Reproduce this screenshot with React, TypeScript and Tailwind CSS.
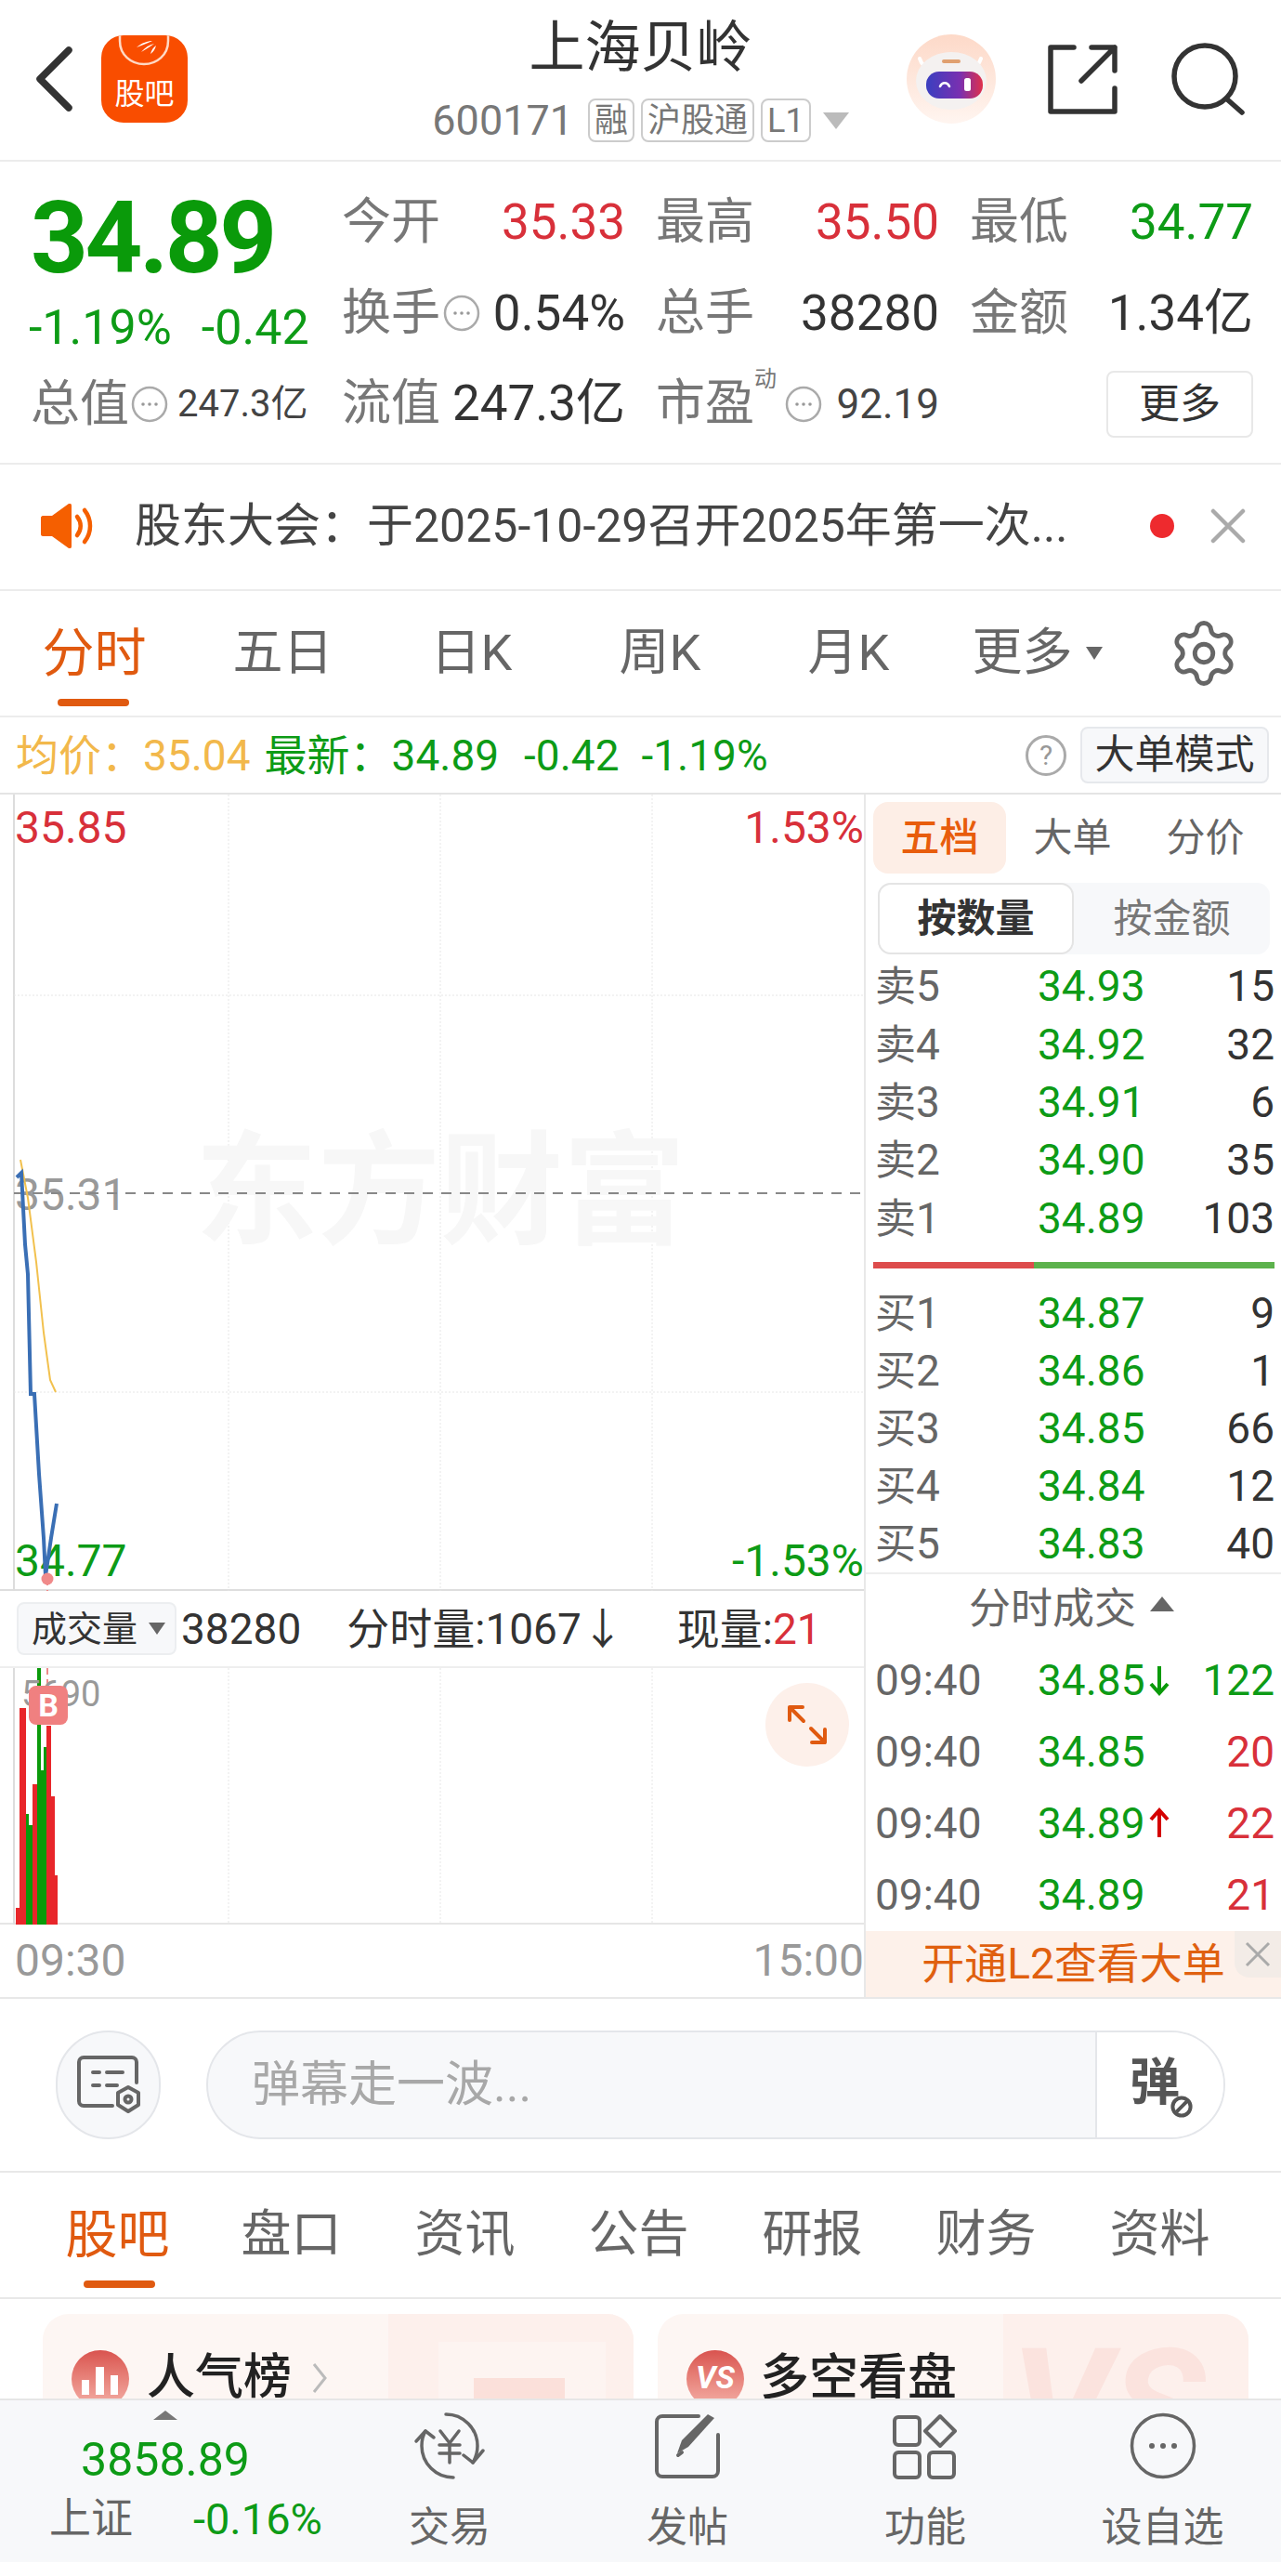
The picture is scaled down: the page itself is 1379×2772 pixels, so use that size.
import { Settings } from "lucide-react";

const askRows = [
  ["卖5", "34.93", "15"],
  ["卖4", "34.92", "32"],
  ["卖3", "34.91", "6"],
  ["卖2", "34.90", "35"],
  ["卖1", "34.89", "103"],
];

const bidRows = [
  ["买1", "34.87", "9"],
  ["买2", "34.86", "1"],
  ["买3", "34.85", "66"],
  ["买4", "34.84", "12"],
  ["买5", "34.83", "40"],
];

const trades = [
  { price: "34.85", arrow: "down", vol: "122", up: false },
  { price: "34.85", arrow: "", vol: "20", up: true },
  { price: "34.89", arrow: "up", vol: "22", up: true },
  { price: "34.89", arrow: "", vol: "21", up: true },
];

const volumeBars = [
  { x: 17, w: 4, y: 2053, up: true },
  { x: 21, w: 7, y: 1838, up: true },
  { x: 28, w: 3, y: 1952, up: false },
  { x: 31, w: 4, y: 1964, up: false },
  { x: 35, w: 5, y: 1920, up: true },
  { x: 40, w: 4, y: 1795, up: false },
  { x: 44, w: 3, y: 1905, up: false },
  { x: 47, w: 3, y: 1880, up: false },
  { x: 50, w: 5, y: 1857, up: true },
  { x: 55, w: 4, y: 1933, up: true },
  { x: 59, w: 3, y: 2018, up: true },
];

function MoreDots() {
  return (
    <svg width="40" height="40" viewBox="0 0 40 40" className="shrink-0" fill="none">
      <circle cx="20" cy="20" r="18" stroke="#aaa" strokeWidth="2.5" />
      <circle cx="13" cy="20" r="1.8" fill="#999" />
      <circle cx="20" cy="20" r="1.8" fill="#999" />
      <circle cx="27" cy="20" r="1.8" fill="#999" />
    </svg>
  );
}

function Chip({ children }: { children: React.ReactNode }) {
  return (
    <span className="h-[47px] px-[5px] flex items-center justify-center border-2 border-[#ccc] rounded-[8px] text-[36px] leading-none text-[#777]">
      {children}
    </span>
  );
}

function Cell({ label, value, tone }: { label: string; value: string; tone: string }) {
  return (
    <div className="flex items-center justify-between">
      <span className="text-[#777] leading-none">{label}</span>
      <span className={`leading-none ${tone}`}>{value}</span>
    </div>
  );
}

function Robot() {
  return (
    <svg width="96" height="96" viewBox="0 0 96 96">
      <defs>
        <linearGradient id="halo" x1="0" y1="0" x2="0" y2="1">
          <stop offset="0" stopColor="#fdd9c8" />
          <stop offset="1" stopColor="#fff5f0" />
        </linearGradient>
        <linearGradient id="visor" x1="0" y1="0" x2="1" y2="0">
          <stop offset="0" stopColor="#3a3fc0" />
          <stop offset="0.6" stopColor="#7a30b0" />
          <stop offset="1" stopColor="#e0304a" />
        </linearGradient>
      </defs>
      <circle cx="48" cy="48" r="48" fill="url(#halo)" />
      <path d="M14 26c2 6 5 9 10 11M80 26c-2 6-5 9-10 11" stroke="#fff" strokeWidth="4" fill="none" strokeLinecap="round" />
      <ellipse cx="48" cy="50" rx="38" ry="31" fill="#f4f1f0" />
      <rect x="38" y="27" width="20" height="4" rx="2" fill="#e0a070" />
      <rect x="21" y="40" width="61" height="29" rx="14" fill="url(#visor)" />
      <path d="M36 56c2-5 8-5 10 0" stroke="#fff" strokeWidth="2.5" fill="none" strokeLinecap="round" />
      <rect x="62" y="47" width="7" height="14" rx="2.5" fill="#fff" />
    </svg>
  );
}

export default function App() {
  return (
    <div className="w-[1379px] h-[2772px] overflow-hidden bg-white flex flex-col font-[Roboto,'Noto_Sans_CJK_SC',sans-serif]">
      {/* Header */}
      <header className="h-[174px] shrink-0 border-b-2 border-[#ececec] grid grid-cols-[1fr_auto_1fr]">
        <div className="h-[170px] flex items-center pl-[39px]">
          <svg width="39" height="70" viewBox="0 0 39 70" fill="none">
            <path d="M35 4 4 35l31 31" stroke="#333" strokeWidth="7.5" strokeLinecap="round" strokeLinejoin="round" />
          </svg>
          <div className="ml-[31px] w-[93px] h-[94px] rounded-[24px] bg-[#f94d00] relative overflow-hidden flex items-end justify-center pb-[15px]">
            <svg className="absolute left-0 top-0" width="93" height="34" viewBox="0 0 93 34" fill="none">
              <path d="M20 -2v8c0 15 12 25 26 25s26-10 26-25v-8" stroke="#ffd9c4" strokeWidth="2.5" />
              <path d="M38 13c6-5 12-7 17-7-5 2-11 5-17 7zm5 5c4-5 9-8 14-9-4 3-9 6-14 9zm10 2c1-4 3-7 6-9-1 4-3 7-6 9z" fill="#fff" />
            </svg>
            <span className="text-[32px] leading-none text-white">股吧</span>
          </div>
        </div>
        <div className="flex flex-col items-center pt-[22px]">
          <div className="text-[60px] leading-none text-[#333]">上海贝岭</div>
          <div className="mt-[24px] flex items-center">
            <span className="text-[45px] leading-none text-[#777] mr-[16px]">600171</span>
            <div className="flex items-center gap-[7px]">
              <Chip>融</Chip>
              <Chip>沪股通</Chip>
              <Chip>L1</Chip>
            </div>
            <span className="ml-[13px] w-0 h-0 border-x-[14px] border-x-transparent border-t-[18px] border-t-[#bbb]" />
          </div>
        </div>
        <div className="h-[170px] flex items-center justify-end pr-[39px]">
          <Robot />
          <svg className="ml-[56px]" width="75" height="75" viewBox="0 0 75 75" fill="none" stroke="#333" strokeWidth="5.5" strokeLinecap="round" strokeLinejoin="round">
            <path d="M28 3H3v69h69V47" />
            <path d="M47 3h25v25M72 3 36 39" />
          </svg>
          <svg className="ml-[57px]" width="80" height="78" viewBox="0 0 80 78" fill="none" stroke="#333" strokeWidth="5.5" strokeLinecap="round">
            <circle cx="37" cy="36" r="33" />
            <path d="m60 60 17 15" />
          </svg>
        </div>
      </header>

      {/* Quote */}
      <section className="h-[326px] shrink-0 border-b-2 border-[#ececec] flex pt-[17px]">
        <div className="w-[368px] pl-[33px] shrink-0">
          <div className="h-[130px] flex items-center text-[108px] font-bold leading-none tracking-[-3.5px] text-[#0a9a0a]">34.89</div>
          <div className="h-[64px] -ml-[2px] flex items-center text-[52px] leading-none text-[#0d9b16]">
            <span>-1.19%</span>
            <span className="ml-[32px]">-0.42</span>
          </div>
          <div className="h-[100px] flex items-center">
            <span className="text-[53px] leading-none text-[#777]">总值</span>
            <span className="ml-[2px]"><MoreDots /></span>
            <span className="ml-[10px] text-[40px] leading-none text-[#444]">247.3亿</span>
          </div>
        </div>
        <div className="w-[980px] grid grid-cols-[305px_305px_305px] gap-x-[33px] auto-rows-[97.5px] text-[53px]">
          <Cell label="今开" value="35.33" tone="text-[#d8303a]" />
          <Cell label="最高" value="35.50" tone="text-[#d8303a]" />
          <Cell label="最低" value="34.77" tone="text-[#0d9b16]" />

          <div className="flex items-center">
            <span className="text-[#777] leading-none">换手</span>
            <span className="ml-[3px]"><MoreDots /></span>
            <span className="ml-auto leading-none text-[#333]">0.54%</span>
          </div>
          <Cell label="总手" value="38280" tone="text-[#333]" />
          <Cell label="金额" value="1.34亿" tone="text-[#333]" />

          <div className="flex items-center">
            <span className="text-[#777] leading-none">流值</span>
            <span className="ml-auto leading-none text-[#333]">247.3亿</span>
          </div>
          <div className="flex items-center relative">
            <span className="text-[#777] leading-none">市盈</span>
            <span className="absolute left-[106px] top-[10px] text-[24px] leading-none text-[#777]">动</span>
            <span className="ml-[33px]"><MoreDots /></span>
            <span className="ml-auto text-[44px] leading-none text-[#444]">92.19</span>
          </div>
          <div className="flex items-center justify-end">
            <button className="w-[158px] h-[72px] border-2 border-[#e8e8e8] rounded-[8px] text-[44px] leading-none text-[#333]">更多</button>
          </div>
        </div>
      </section>

      {/* Notice */}
      <section className="h-[136px] shrink-0 border-b-2 border-[#ececec] flex items-center pb-[2px]">
        <svg className="ml-[44px]" width="57" height="48" viewBox="0 0 57 48" fill="#f55f00">
          <path d="M0 15c0-1 1-2 2-2h10L30 0c1-1 3 0 3 2v44c0 2-2 3-3 2L12 35H2c-1 0-2-1-2-2z" />
          <path d="M39 14c5 6 5 14 0 20M47 7c8 10 8 24 0 34" fill="none" stroke="#f55f00" strokeWidth="4.5" strokeLinecap="round" />
        </svg>
        <span className="ml-[44px] w-[1070px] text-[50px] leading-none text-[#444] whitespace-nowrap">股东大会：于2025-10-29召开2025年第一次...</span>
        <span className="ml-[23px] w-[26px] h-[26px] rounded-full bg-[#ee2a2e]" />
        <svg className="ml-[39px]" width="38" height="38" viewBox="0 0 38 38" stroke="#aaa" strokeWidth="4.5" strokeLinecap="round">
          <path d="m3 3 32 32M35 3 3 35" />
        </svg>
      </section>

      {/* Chart tabs */}
      <nav className="h-[136px] shrink-0 border-b-2 border-[#ececec] flex text-[54px] text-[#666]">
        <div className="w-[203px] h-full relative flex items-center justify-center text-[56px] text-[#e05a10]">
          <span className="leading-none">分时</span>
          <span className="absolute left-[62px] bottom-[10px] w-[77px] h-[8px] rounded-full bg-[#e05a10]" />
        </div>
        <div className="w-[203px] flex items-center justify-center leading-none">五日</div>
        <div className="w-[203px] flex items-center justify-center leading-none">日K</div>
        <div className="w-[203px] flex items-center justify-center leading-none">周K</div>
        <div className="w-[203px] flex items-center justify-center leading-none">月K</div>
        <div className="w-[203px] flex items-center justify-center leading-none">
          更多
          <span className="ml-[14px] w-0 h-0 border-x-[9px] border-x-transparent border-t-[14px] border-t-[#666]" />
        </div>
        <div className="ml-[39px] flex items-center">
          <Settings size={78} strokeWidth={1.5} color="#666" />
        </div>
      </nav>

      {/* Price info */}
      <div className="h-[83px] shrink-0 border-b-2 border-[#e4e4e4] flex items-center pl-[17px] pr-[13px] text-[46px] leading-none">
        <span className="text-[#f2b84b]">均价：</span>
        <span className="-ml-[1px] text-[#f2b84b]">35.04</span>
        <span className="ml-[15px] text-[#0d9b16]">最新：</span>
        <span className="-ml-[1px] text-[#0d9b16]">34.89</span>
        <span className="ml-[27px] text-[#0d9b16]">-0.42</span>
        <span className="ml-[24px] text-[#0d9b16]">-1.19%</span>
        <span className="ml-auto w-[44px] h-[44px] rounded-full border-[3px] border-[#aaa] flex items-center justify-center text-[30px] text-[#999]">?</span>
        <span className="ml-[15px] w-[203px] h-[61px] border-2 border-[#e6e8ec] bg-[#f7f8fa] rounded-[8px] flex items-center justify-center text-[43px] text-[#333]">大单模式</span>
      </div>

      {/* Chart and order book */}
      <section className="h-[1296px] shrink-0 border-b-2 border-[#e8e8e8] flex">
        <div className="w-[930px] shrink-0 flex flex-col">
          {/* Price pane */}
          <div className="relative h-[857px] shrink-0 border-b-2 border-[#dedede]">
            <svg className="absolute left-0 top-0" width="930" height="857" viewBox="0 855 930 857" fill="none">
              <path d="M15 855v857" stroke="#ddd" strokeWidth="2" />
              <path d="M246 855v857M474 855v857M702 855v857M15 1071h915M15 1498h915" stroke="#e6e6e6" strokeDasharray="2 2" />
            </svg>
            <div className="absolute left-[210px] top-[362px] text-[132px] font-bold leading-none text-[#f7f7f7] whitespace-nowrap">东方财富</div>
            <div className="absolute left-[16px] top-[12px] text-[48px] leading-none text-[#d8303a]">35.85</div>
            <div className="absolute right-0 top-[12px] text-[48px] leading-none text-[#d8303a]">1.53%</div>
            <div className="absolute left-[16px] top-[407px] text-[48px] leading-none text-[#999]">35.31</div>
            <div className="absolute left-[16px] top-[801px] text-[48px] leading-none text-[#0d9b16]">34.77</div>
            <div className="absolute right-0 top-[801px] text-[48px] leading-none text-[#0d9b16]">-1.53%</div>
            <svg className="absolute left-0 top-0" width="930" height="857" viewBox="0 855 930 857" fill="none">
              <path d="M15 1284h915" stroke="#888" strokeWidth="2" strokeDasharray="11 9" />
              <polyline points="22,1248 30,1289 39,1358 47,1434 54,1485 60,1498" stroke="#f2c14e" strokeWidth="2" />
              <polyline points="18,1267 23,1262 27,1339 30,1371 33,1500 37,1500 42,1586 47,1655 49,1696 55,1655 61,1618" stroke="#3a6fb5" strokeWidth="4" />
              <path d="M51 1699v13" stroke="#f08a8a" strokeWidth="2" strokeDasharray="7 5" />
              <circle cx="51" cy="1699" r="6.5" fill="#f08a8a" />
            </svg>
          </div>

          {/* Volume header */}
          <div className="relative h-[83px] shrink-0 border-b-2 border-[#eee] flex items-center pl-[18px] text-[46px] leading-none text-[#333]">
            <div className="w-[172px] h-[57px] bg-[#f7f8fa] border-2 border-[#eceef0] rounded-[8px] flex items-center pl-[14px] text-[38px] text-[#333]">
              成交量
              <span className="ml-[12px] w-0 h-0 border-x-[9px] border-x-transparent border-t-[13px] border-t-[#666]" />
            </div>
            <span className="ml-[5px]">38280</span>
            <span className="ml-[49px] text-[#333]">分时量:1067↓</span>
            <span className="ml-[57px]">现量:</span>
            <span className="text-[#d8303a]">21</span>
          </div>

          {/* Volume pane */}
          <div className="relative h-[276px] shrink-0 border-b-2 border-[#e6e6e6]">
            <svg className="absolute left-0 top-0" width="930" height="276" viewBox="0 1795 930 276" fill="none">
              <path d="M15 1795v276" stroke="#ddd" strokeWidth="2" />
              <path d="M246 1795v276M474 1795v276M702 1795v276" stroke="#e6e6e6" strokeDasharray="2 2" />
              {volumeBars.map((bar) => (
                <rect key={bar.x} x={bar.x} y={bar.y} width={bar.w} height={2071 - bar.y} fill={bar.up ? "#e8262a" : "#0a9a0a"} />
              ))}
              <path d="M51 1795v19" stroke="#f08a8a" strokeWidth="2" strokeDasharray="7 5" />
            </svg>
            <div className="absolute left-[23px] top-[9px] text-[38px] leading-none text-[#999]">5690</div>
            <div className="absolute left-[31px] top-[19px] w-[42px] h-[42px] rounded-[8px] bg-[#f08080] flex items-center justify-center text-[34px] font-bold leading-none text-white">B</div>
            <div className="absolute left-[824px] top-[16px] w-[90px] h-[90px] rounded-full bg-[#fdf0ea] flex items-center justify-center">
              <svg width="44" height="44" viewBox="0 0 44 44" fill="none" stroke="#e05a10" strokeWidth="4" strokeLinecap="round" strokeLinejoin="round">
                <path d="M3 17V3h14M3 3l15 15M41 27v14H27M41 41 26 26" />
              </svg>
            </div>
          </div>

          {/* Time axis */}
          <div className="flex-1 flex items-center justify-between pl-[16px] text-[48px] leading-none text-[#999]">
            <span>09:30</span>
            <span>15:00</span>
          </div>
        </div>

        {/* Order book */}
        <aside className="w-[449px] shrink-0 border-l-2 border-[#e8e8e8] flex flex-col">
          <div className="h-[86px] shrink-0 pt-[8px] pl-[8px] flex text-[42px] leading-none text-[#666]">
            <span className="w-[143px] h-[77px] rounded-[16px] bg-[#fdeee6] flex items-center justify-center font-medium text-[#e85d0c]">五档</span>
            <span className="w-[143px] h-[77px] flex items-center justify-center">大单</span>
            <span className="w-[143px] h-[77px] flex items-center justify-center">分价</span>
          </div>
          <div className="ml-[13px] mt-[9px] w-[422px] h-[77px] shrink-0 rounded-[14px] bg-[#f7f8fa] flex text-[42px] leading-none">
            <span className="w-[211px] h-full rounded-[14px] bg-white border-2 border-[#e4e4e4] flex items-center justify-center font-bold text-[#333]">按数量</span>
            <span className="w-[211px] h-full flex items-center justify-center text-[#777]">按金额</span>
          </div>
          <div className="mt-[3px] flex flex-col">
            {askRows.map((row) => (
              <div key={row[0]} className="h-[62.4px] flex items-center pl-[10px] pr-[7px] text-[46px] leading-none">
                <span className="w-[175px] text-[#666]">
                  <span className="text-[44px]">{row[0].slice(0, 1)}</span>
                  {row[0].slice(1)}
                </span>
                <span className="text-[#0d9b16]">{row[1]}</span>
                <span className="ml-auto text-[#333]">{row[2]}</span>
              </div>
            ))}
          </div>
          <div className="mt-[16px] ml-[8px] w-[432px] h-[7px] shrink-0 flex">
            <span className="w-[173px] bg-[#dd4c4c]" />
            <span className="flex-1 bg-[#5cb24c]" />
          </div>
          <div className="mt-[17px] flex flex-col border-b-2 border-[#eee]">
            {bidRows.map((row) => (
              <div key={row[0]} className="h-[62px] flex items-center pl-[10px] pr-[7px] text-[46px] leading-none">
                <span className="w-[175px] text-[#666]">
                  <span className="text-[44px]">{row[0].slice(0, 1)}</span>
                  {row[0].slice(1)}
                </span>
                <span className="text-[#0d9b16]">{row[1]}</span>
                <span className="ml-auto text-[#333]">{row[2]}</span>
              </div>
            ))}
          </div>
          <div className="h-[76px] shrink-0 flex items-center justify-center text-[45px] leading-none text-[#666] pr-[4px]">
            分时成交
            <span className="ml-[15px] -mt-[12px] w-0 h-0 border-x-[13px] border-x-transparent border-b-[16px] border-b-[#666]" />
          </div>
          {trades.map((trade, i) => (
            <div key={i} className="h-[77px] shrink-0 flex items-center pl-[10px] pr-[7px] text-[46px] leading-none">
              <span className="w-[175px] text-[#666]">09:40</span>
              <span className="text-[#0d9b16]">{trade.price}</span>
              {trade.arrow === "down" && (
                <svg className="ml-[4px]" width="22" height="34" viewBox="0 0 22 34" fill="none" stroke="#0a9a0a" strokeWidth="4">
                  <path d="M11 2v29M2 21l9 10 9-10" />
                </svg>
              )}
              {trade.arrow === "up" && (
                <svg className="ml-[4px]" width="22" height="34" viewBox="0 0 22 34" fill="none" stroke="#d40000" strokeWidth="4">
                  <path d="M11 32V3M2 13l9-10 9 10" />
                </svg>
              )}
              <span className={`ml-auto ${trade.up ? "text-[#d8303a]" : "text-[#0d9b16]"}`}>{trade.vol}</span>
            </div>
          ))}
          <div className="relative flex-1 bg-[#fdf1ea] flex items-center justify-center pr-[0px] text-[46px] leading-none text-[#e0600f]">
            开通L2查看大单
            <div className="absolute right-0 top-0 w-[50px] h-[50px] bg-[#f3ece7] rounded-bl-[16px] flex items-center justify-center">
              <svg width="28" height="28" viewBox="0 0 28 28" stroke="#aaa" strokeWidth="3">
                <path d="m2 2 24 24M26 2 2 26" />
              </svg>
            </div>
          </div>
        </aside>
      </section>

      {/* Danmaku */}
      <section className="h-[187px] shrink-0 border-b-2 border-[#e8e8e8] flex items-center pl-[60px]">
        <div className="w-[113px] h-[117px] rounded-full bg-[#f7f8fa] border-2 border-[#e4e6ea] flex items-center justify-center">
          <svg width="72" height="66" viewBox="0 0 72 66" fill="none" stroke="#666" strokeWidth="4" strokeLinecap="round" strokeLinejoin="round">
            <path d="M66 30V8a5 5 0 0 0-5-5H9a5 5 0 0 0-5 5v42a5 5 0 0 0 5 5h31" />
            <path d="M19 19h7M34 19h17M19 33h7M34 33h11" />
            <path d="m57 35 11 6v13l-11 7-11-7V41z" fill="#f7f8fa" />
            <circle cx="57" cy="48" r="3.5" />
          </svg>
        </div>
        <div className="ml-[49px] w-[1097px] h-[117px] rounded-full bg-[#f7f8fa] border-2 border-[#e4e6ea] flex items-center overflow-hidden">
          <span className="pl-[47px] flex-1 text-[52px] leading-none text-[#a8a8a8]">弹幕走一波...</span>
          <div className="relative w-[138px] h-full border-l-2 border-[#e4e6ea] bg-white">
            <span className="absolute left-[35px] top-[28px] text-[54px] font-bold leading-none text-[#555]">弹</span>
            <svg className="absolute left-[76px] top-[68px]" width="30" height="24" viewBox="0 0 30 30" fill="#fff" stroke="#555" strokeWidth="5">
              <circle cx="15" cy="15" r="12" />
              <path d="m8 22 14-14" />
            </svg>
          </div>
        </div>
      </section>

      {/* Detail tabs */}
      <nav className="h-[136px] shrink-0 border-b-2 border-[#e8e8e8] flex pl-[33px] text-[54px] text-[#666]">
        <div className="relative w-[187px] flex items-center justify-center text-[56px] text-[#e05a10]">
          <span className="leading-none">股吧</span>
          <span className="absolute left-[57px] bottom-[10px] w-[77px] h-[8px] rounded-full bg-[#e05a10]" />
        </div>
        {["盘口", "资讯", "公告", "研报", "财务", "资料"].map((tab) => (
          <div key={tab} className="w-[187px] flex items-center justify-center leading-none">{tab}</div>
        ))}
      </nav>

      {/* Feature cards */}
      <section className="h-[107px] shrink-0 overflow-hidden flex pl-[46px] pt-[16px] gap-[26px]">
        <div className="relative w-[636px] h-[200px] shrink-0 rounded-[28px] bg-[#fdf6f3] overflow-hidden">
          <div className="absolute right-0 top-0 w-[264px] h-full bg-[#fdf0ec]" />
          <div className="absolute left-[426px] top-[30px] w-[180px] h-[170px] bg-[#fdf4f1]" />
          <div className="absolute left-[464px] top-[69px] w-[98px] h-[130px] bg-[#fbe0da]" />
          <div className="absolute left-[31px] top-[39px] w-[62px] h-[62px] rounded-full bg-gradient-to-b from-[#d9534f] to-[#f3b0a8] flex items-start justify-center pt-[18px]">
            <svg width="44" height="30" viewBox="0 0 44 30" fill="#fff">
              <rect x="2" y="14" width="8" height="16" />
              <rect x="17" y="0" width="9" height="30" />
              <rect x="33" y="9" width="8" height="21" />
            </svg>
          </div>
          <div className="absolute left-[112px] top-[43px] flex items-center text-[52px] font-medium leading-none text-[#222]">
            人气榜
            <svg className="ml-[22px]" width="16" height="34" viewBox="0 0 16 34" fill="none" stroke="#bbb" strokeWidth="3">
              <path d="m2 2 12 15L2 32" />
            </svg>
          </div>
        </div>
        <div className="relative w-[636px] h-[200px] shrink-0 rounded-[28px] bg-[#fdf6f3] overflow-hidden">
          <div className="absolute right-0 top-0 w-[264px] h-full bg-[#fdf0ec]" />
          <div className="absolute left-[380px] top-[15px] text-[170px] font-bold italic leading-none text-[#fbe3de]">VS</div>
          <div className="absolute left-[31px] top-[39px] w-[62px] h-[62px] rounded-full bg-gradient-to-b from-[#d9534f] to-[#f3b0a8] flex items-start justify-center pt-[12px] text-[34px] font-bold italic leading-none text-white">VS</div>
          <div className="absolute left-[110px] top-[43px] text-[53px] font-medium leading-none text-[#222]">多空看盘</div>
        </div>
      </section>

      {/* Bottom bar */}
      <footer className="h-[176px] shrink-0 bg-[#f7f8fa] border-t-2 border-[#e6e6e6] flex">
        <div className="w-[356px] shrink-0 flex flex-col items-center pt-[11px]">
          <span className="w-0 h-0 border-x-[13px] border-x-transparent border-b-[10px] border-b-[#777]" />
          <span className="mt-[18px] text-[50px] leading-none text-[#0d9b16]">3858.89</span>
          <div className="mt-[15px] w-full pl-[53px] pr-[9px] flex items-center justify-between">
            <span className="text-[45px] leading-none text-[#666]">上证</span>
            <span className="text-[47px] leading-none text-[#0d9b16]">-0.16%</span>
          </div>
        </div>
        <div className="w-[256px] flex flex-col items-center pt-[13px]">
          <svg width="84" height="72" viewBox="0 0 84 72" fill="none" stroke="#666" strokeWidth="3.5" strokeLinecap="round" strokeLinejoin="round">
            <path d="M38 2a34 34 0 0 1 34 34c0 7-2 13-5 18" />
            <path d="m78 41-11 13-10-8" />
            <path d="M46 70A34 34 0 0 1 12 36c0-6 1-11 4-16" />
            <path d="m6 31 10-11 9 7" />
            <path d="m32 20 10 13 10-13M42 33v21M31 35h22M31 44h22" />
          </svg>
          <span className="mt-[30px] text-[44px] leading-none text-[#666]">交易</span>
        </div>
        <div className="w-[256px] flex flex-col items-center pt-[13px]">
          <svg width="72" height="72" viewBox="0 0 72 72" fill="none" stroke="#666" strokeWidth="4" strokeLinecap="round" strokeLinejoin="round">
            <path d="M48 4H9a6 6 0 0 0-6 6v53a6 6 0 0 0 6 6h54a6 6 0 0 0 6-6V24" />
            <path d="M25 44 30 30 58 2l7 4-28 31z" fill="#666" stroke="none" />
            <path d="m26 46 4-3" />
          </svg>
          <span className="mt-[30px] text-[44px] leading-none text-[#666]">发帖</span>
        </div>
        <div className="w-[256px] flex flex-col items-center pt-[13px]">
          <svg width="72" height="72" viewBox="0 0 72 72" fill="none" stroke="#666" strokeWidth="4" strokeLinejoin="round">
            <rect x="3" y="5" width="27" height="30" rx="4" />
            <path d="m52 4 16 16-16 16-16-16z" />
            <rect x="3" y="43" width="27" height="27" rx="4" />
            <rect x="40" y="43" width="27" height="27" rx="4" />
          </svg>
          <span className="mt-[30px] text-[44px] leading-none text-[#666]">功能</span>
        </div>
        <div className="w-[255px] flex flex-col items-center pt-[13px]">
          <svg width="72" height="72" viewBox="0 0 72 72" fill="none">
            <circle cx="36" cy="36" r="33.5" stroke="#666" strokeWidth="3.5" />
            <circle cx="24" cy="36" r="3" fill="#666" />
            <circle cx="36" cy="36" r="3" fill="#666" />
            <circle cx="48" cy="36" r="3" fill="#666" />
          </svg>
          <span className="mt-[30px] text-[44px] leading-none text-[#666]">设自选</span>
        </div>
      </footer>
    </div>
  );
}
